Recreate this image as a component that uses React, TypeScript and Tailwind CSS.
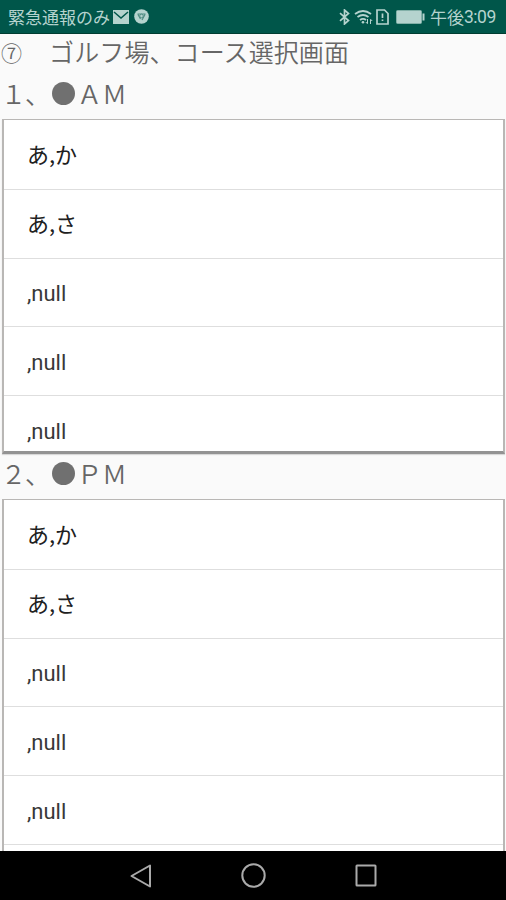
import React from "react";

const ROWS = ["あ,か", "あ,さ", ",null", ",null", ",null"];

function StatusBar() {
  return (
    <header className="flex h-[34px] w-full shrink-0 items-center border-b border-[#003d31] bg-[#00564a] pl-2 pr-[11px] text-[#b5d3ce]">
      <span className="w-[102px] whitespace-nowrap text-[17px] leading-[34px]">緊急通報のみ</span>
      <svg className="ml-[3px] h-[14px] w-4" viewBox="0 0 16 14">
        <rect width="16" height="14" fill="#b5d3ce" />
        <path d="M1 2L8 8L15 2" fill="none" stroke="#00564a" strokeWidth="1.5" />
      </svg>
      <svg className="ml-[5px] h-[15px] w-[15px]" viewBox="0 0 15 15">
        <circle cx="7.5" cy="7.5" r="7.3" fill="#b5d3ce" />
        <path d="M3.5 5H11.5M4 5.5L6.5 10M11 5.5L8 11" fill="none" stroke="#4f8c82" strokeWidth="1.2" />
        <circle cx="7.5" cy="7" r="1.8" fill="#b5d3ce" stroke="#4f8c82" />
      </svg>
      <div className="ml-auto flex items-center">
        <svg className="h-4 w-[11px]" viewBox="0 0 11 16" fill="none" stroke="currentColor" strokeWidth="1.7">
          <path d="M1 4.2L9.5 11.5L5.5 15V1L9.5 4.5L1 11.8" />
        </svg>
        <svg className="ml-1 h-4 w-[19px]" viewBox="0 0 19 16" fill="none" stroke="currentColor" strokeWidth="1.8">
          <path d="M1 5Q9 -1 17 5M3.5 8Q9 4 14.5 8M6 11Q9 8.7 12 11" />
          <circle cx="9" cy="13.3" r="1.3" fill="currentColor" stroke="none" />
          <path d="M13.5 10V14.5M11.8 13L13.5 14.8M16.5 15V10.5M18.2 12L16.5 10.2" strokeWidth="1" />
        </svg>
        <svg className="ml-[3px] h-4 w-[13px]" viewBox="0 0 13 16" fill="none" stroke="currentColor" strokeWidth="1.7">
          <path d="M1 1H8.5L12 4.5V15H1Z" />
          <path d="M6.5 4.5V9M6.5 10.5V12" />
        </svg>
        <svg className="ml-[7px] h-[14px] w-[29px]" viewBox="0 0 29 14">
          <rect x=".5" y=".5" width="25" height="13" rx="1" fill="#b5d3ce" stroke="#82b0a8" />
          <rect x="26.5" y="3.5" width="2" height="7" fill="#b5d3ce" />
        </svg>
        <span className="ml-[5px] flex w-[65px] whitespace-nowrap leading-[34px]">
          <span className="text-[17px]">午後</span>
          <span className="font-['Roboto',sans-serif] text-[17.5px] tracking-[-0.5px]">3:09</span>
        </span>
      </div>
    </header>
  );
}

function CourseList({ className }: { className: string }) {
  return (
    <ul
      className={`ml-[2px] mr-[1px] overflow-hidden border-2 border-t border-[#b9b7b5] bg-white pt-px font-normal ${className}`}
    >
      {ROWS.map((row, i) => (
        <li
          key={i}
          className="flex h-[68.8px] items-center border-b border-[#dedede] pl-[23px] text-[22px] leading-[30px] text-[#202020]"
        >
          {row.startsWith(",") ? (
            <span className="pt-[4px] font-['Roboto',sans-serif] text-[#383838]">{row}</span>
          ) : (
            <span className="pb-[3px]">{row}</span>
          )}
        </li>
      ))}
    </ul>
  );
}

function Heading({ number, label }: { number: string; label: string }) {
  return (
    <h2 className="flex h-[45px] items-center whitespace-nowrap pl-[2px] text-[25px] leading-[45px]">
      <span className="-ml-px">{number}</span>
      <span className="-ml-px mr-[2px]">、</span>
      <span className="mr-[2px] h-[23px] w-[23px] rounded-full bg-[#707070]" />
      <span>{label}</span>
    </h2>
  );
}

export default function App() {
  return (
    <div className="flex h-[900px] w-full flex-col overflow-hidden bg-[#fafafa] font-['Noto_Sans_CJK_JP',sans-serif]">
      <StatusBar />
      <main className="flex min-h-0 flex-1 flex-col overflow-hidden font-[350] text-[#666666]">
        <h1 className="flex h-[37px] shrink-0 whitespace-nowrap text-[25px] leading-[35px]">
          <span className="w-[24px] pl-[1px] pt-px text-[21px]">⑦</span>
          <span className="tracking-[0.1px]">　ゴルフ場、コース選択画面</span>
        </h1>
        <section className="h-[379px] shrink-0">
          <Heading number="１" label="ＡＭ" />
          <div className="pt-[3px]">
            <CourseList className="h-[335px] border-b-[3px] border-b-[#939393] shadow-[0_1px_1px_#d8d8d8]" />
          </div>
        </section>
        <section className="shrink-0 pt-px">
          <Heading number="２" label="ＰＭ" />
          <div className="h-[355px] overflow-hidden pt-[3px]">
            <CourseList className="h-[400px]" />
          </div>
        </section>
      </main>
      <nav className="flex h-[49px] shrink-0 items-center bg-black">
        <svg className="ml-[130px] h-6 w-[22px]" viewBox="0 0 22 24" fill="none" stroke="#aaa" strokeWidth="2" strokeLinejoin="round">
          <path d="M1.5 12L20 1.5V22.5Z" />
        </svg>
        <svg className="ml-[89px] h-[25px] w-[25px]" viewBox="0 0 25 25" fill="none" stroke="#aaa" strokeWidth="2">
          <circle cx="12.5" cy="12.5" r="11.2" />
        </svg>
        <svg className="ml-[89px] h-[23px] w-[22px]" viewBox="0 0 22 23" fill="none" stroke="#aaa" strokeWidth="2">
          <rect x="1.5" y="1.5" width="19" height="20" rx=".5" />
        </svg>
      </nav>
    </div>
  );
}
